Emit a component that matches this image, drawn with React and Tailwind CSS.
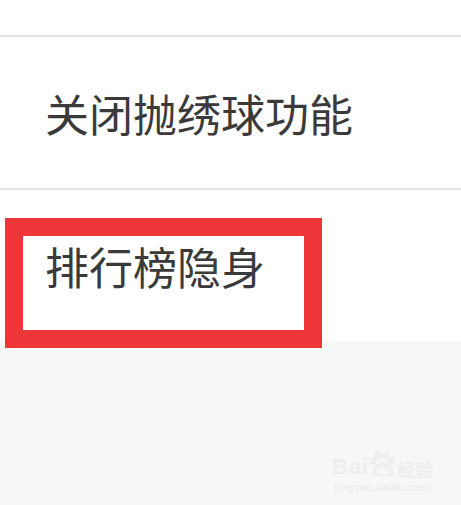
import React from 'react';

const cjk = { fontFamily: '"Noto Sans CJK SC", "Noto Sans", sans-serif' };

const Row = ({ label }) => (
    <div className="h-[151px] flex items-center pl-[45px] bg-white">
        <span className="text-[44px] leading-none text-[#3a3a3a]" style={cjk}>{label}</span>
    </div>
);

const Watermark = () => (
    <div className="absolute right-[28px] bottom-[12px] flex flex-col items-center text-[#ededed] select-none">
        <div className="flex items-end">
            <span className="text-[22px] leading-none font-bold tracking-[1px]" style={{ fontFamily: '"Liberation Sans", sans-serif' }}>Bai</span>
            <svg width="26" height="27" viewBox="0 0 26 27" className="mx-[1px]">
                <g fill="#efefef" stroke="#e4e4e4" strokeWidth="0.6">
                    <ellipse cx="8" cy="4" rx="3" ry="3.6" />
                    <ellipse cx="16" cy="4" rx="3" ry="3.6" />
                    <ellipse cx="3.5" cy="10" rx="2.7" ry="3.2" />
                    <ellipse cx="21.5" cy="10" rx="2.7" ry="3.2" />
                    <path d="M3 24 C3 16 8 12 12.5 12 C17 12 23 16 23 24 Z" />
                </g>
                <text x="13" y="23" textAnchor="middle" fontSize="9" fontWeight="bold" fill="#ffffff" fontFamily="Liberation Sans, sans-serif">du</text>
            </svg>
            <span className="text-[18px] leading-none font-bold" style={cjk}>经验</span>
        </div>
        <span className="text-[11px] leading-none mt-[4px] font-bold" style={{ fontFamily: '"Liberation Sans", sans-serif' }}>jingyan.baidu.com</span>
    </div>
);

export default function App() {
    return (
        <div className="relative w-[461px] h-[505px] bg-[#f7f7f7] overflow-hidden">
            <div className="h-[37px] bg-white border-b-2 border-[#e3e3e6]"></div>
            <Row label="关闭抛绣球功能" />
            <div className="h-[2px] bg-[#e3e3e6]"></div>
            <Row label="排行榜隐身" />

            {/* red highlight box */}
            <div className="absolute left-[5px] top-[218px] w-[317px] h-[130px] border-[18px] border-[#ee3538]"></div>

            <Watermark />
        </div>
    );
}
